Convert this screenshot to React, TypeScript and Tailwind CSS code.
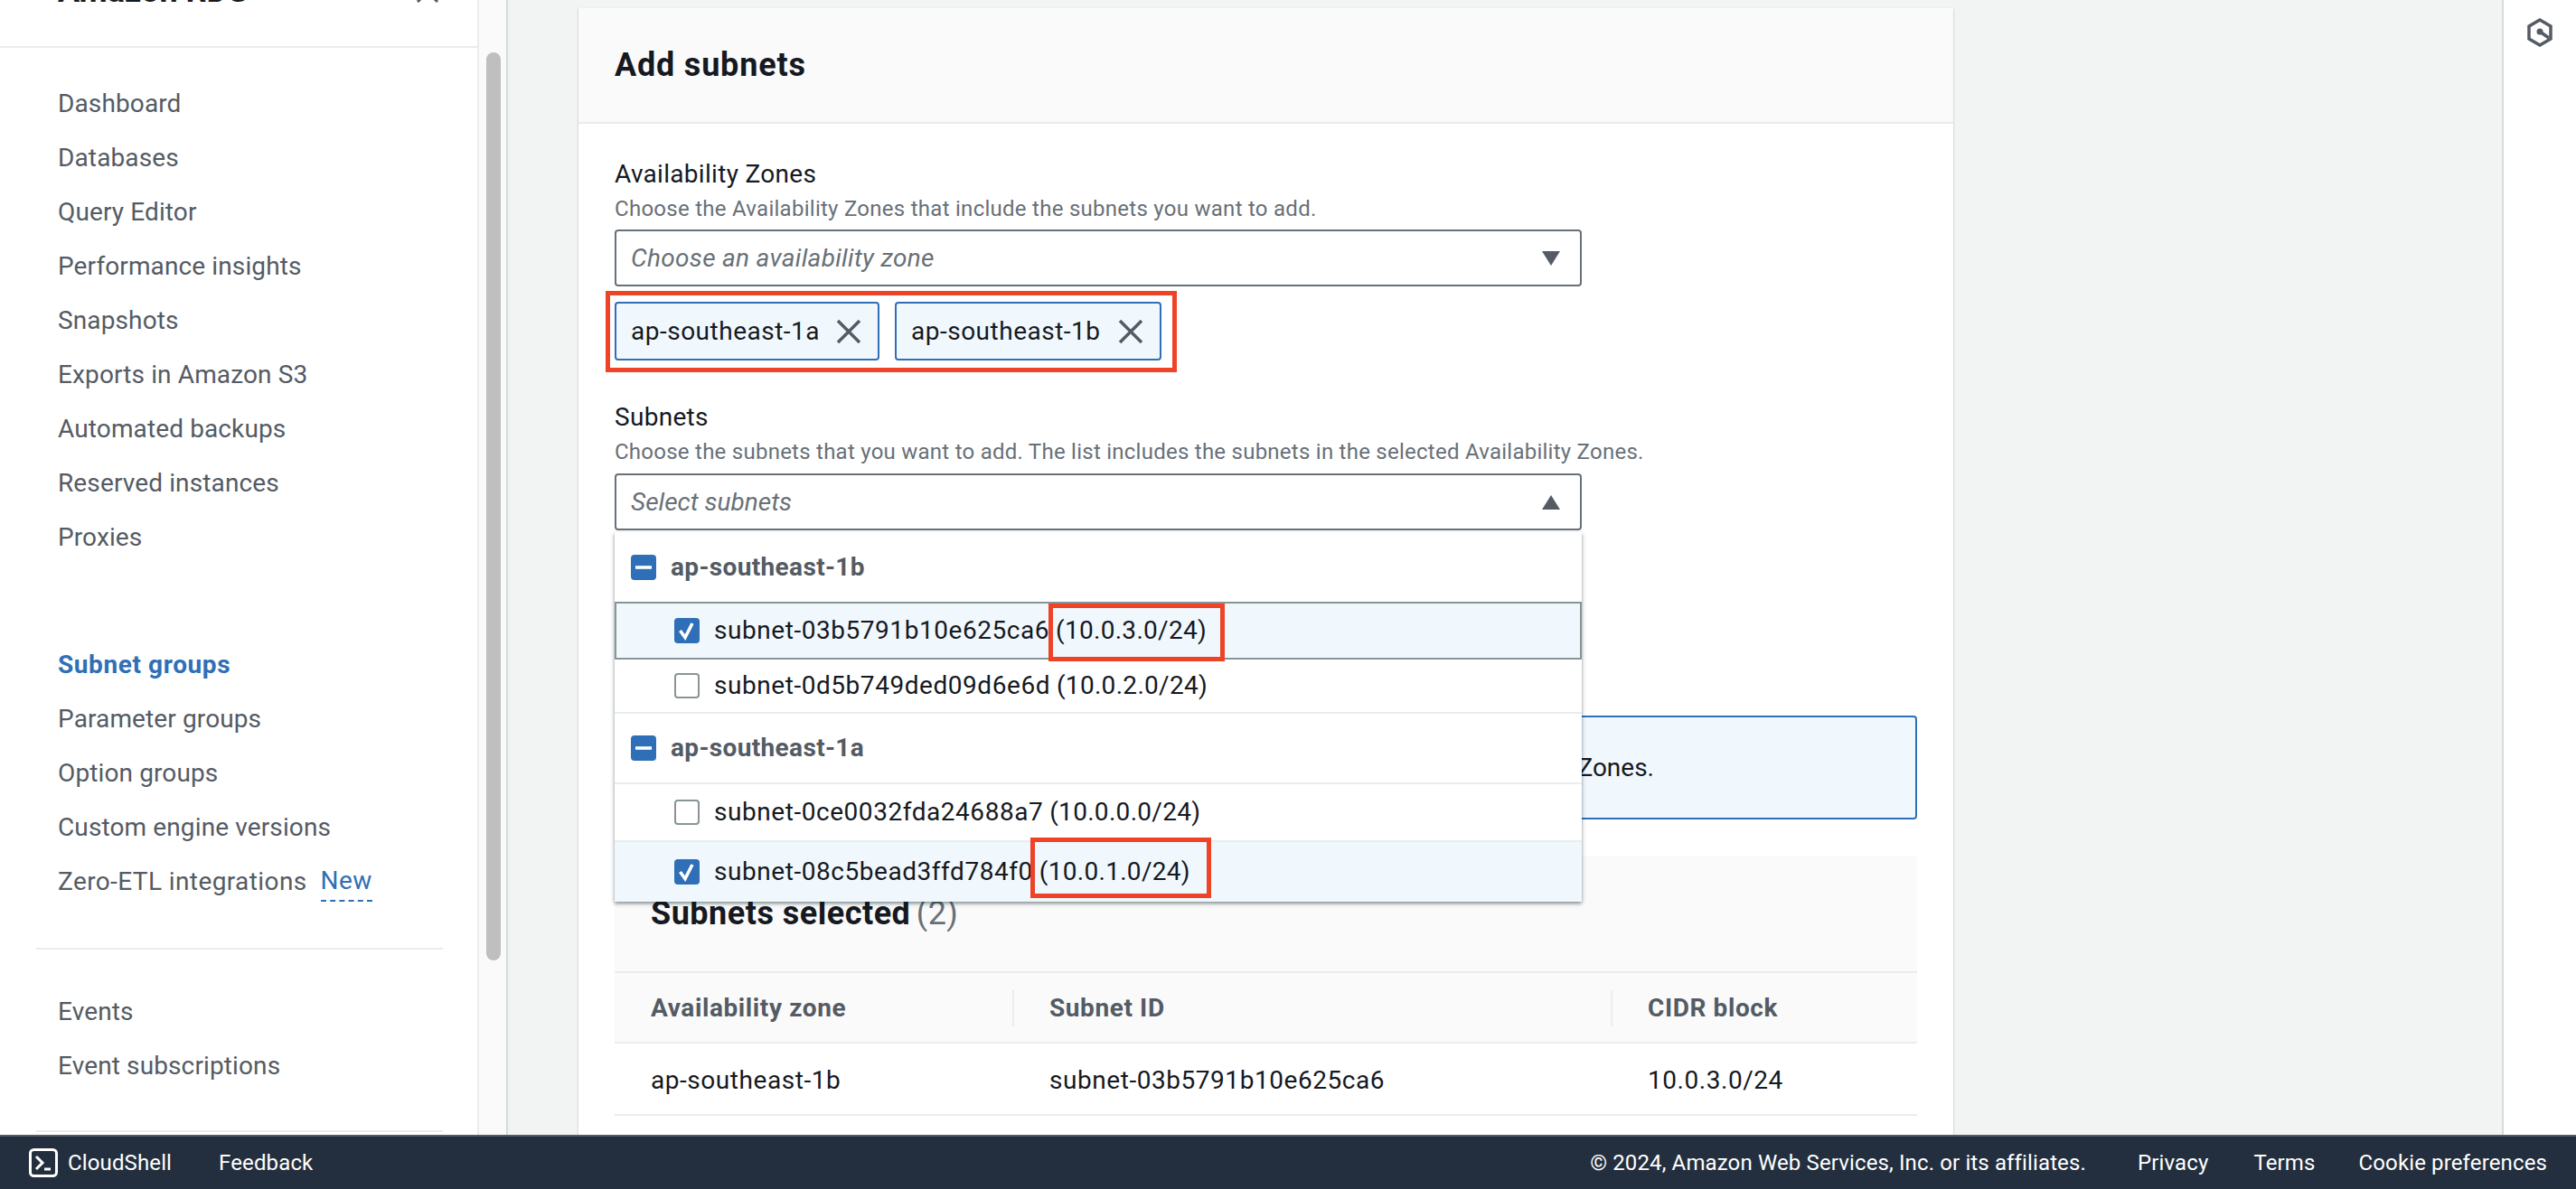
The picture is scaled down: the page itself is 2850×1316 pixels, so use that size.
import React from 'react';

const NAV_TOP = ['Dashboard', 'Databases', 'Query Editor', 'Performance insights', 'Snapshots', 'Exports in Amazon S3', 'Automated backups', 'Reserved instances', 'Proxies'];
const NAV_MID = ['Parameter groups', 'Option groups', 'Custom engine versions'];
const NAV_EVENTS = ['Events', 'Event subscriptions'];

const NavItem: React.FC<{ label: string }> = ({ label }) => (
  <div className="h-[60px] flex items-center text-[28px] tracking-[0.12px] text-[#545b64]">{label}</div>
);

const Checkbox: React.FC<{ state: 'on' | 'off' | 'mixed' }> = ({ state }) => {
  if (state === 'off') {
    return <span className="block w-[28px] h-[28px] shrink-0 rounded-[4px] border-2 border-[#879596] bg-white" />;
  }
  return (
    <span className="flex items-center justify-center w-[28px] h-[28px] shrink-0 rounded-[4px] bg-[#2f6fb7]">
      <svg width="28" height="28" viewBox="0 0 28 28" fill="none" stroke="white" strokeWidth="3.6">
        {state === 'on' ? <path d="M6.500 14l5.500 7.500 8-15.500" /> : <path d="M5 14h18" />}
      </svg>
    </span>
  );
};

const Token: React.FC<{ label: string; width: string }> = ({ label, width }) => (
  <div className={`h-[65px] ${width} flex items-center justify-between pl-[16px] pr-[18px] rounded-[4px] border-2 border-[#2f6fb7] bg-[#f1f8fd] text-[28px] tracking-[0.5px] text-[#16191f]`}>
    <span>{label}</span>
    <svg width="28" height="28" viewBox="0 0 28 28" fill="none" stroke="#545b64" strokeWidth="3.5">
      <path d="M2 2l24 24M26 2 2 26" />
    </svg>
  </div>
);

const SelectBox: React.FC<{ placeholder: string; open?: boolean; className?: string }> = ({ placeholder, open, className }) => (
  <div className="h-[63px] w-[1070px] flex items-center justify-between pl-[16px] pr-[22px] rounded-[4px] border-2 border-[#687078] bg-white">
    <span className={`text-[28px] italic text-[#687078] ${className ?? ''}`}>{placeholder}</span>
    <svg width="20" height="16" viewBox="0 0 20 16" fill="#545b64">
      {open ? <path d="M10 0 20 16H0z" /> : <path d="M0 0h20L10 16z" />}
    </svg>
  </div>
);

const GroupRow: React.FC<{ label: string; heightClass: string; border?: boolean }> = ({ label, heightClass, border }) => (
  <div className={`${heightClass} flex items-center pl-[18px] gap-[16px] ${border ? 'border-b-2 border-[#eaeded]' : ''}`}>
    <Checkbox state="mixed" />
    <span className="text-[28px] font-bold tracking-[0.35px] text-[#545b64]">{label}</span>
  </div>
);

const OptionRow: React.FC<{ id: string; cidr: string; checked?: boolean; className: string; box?: string }> = ({ id, cidr, checked, className, box }) => (
  <div className={`relative flex items-center gap-[16px] text-[28px] text-[#16191f] ${className}`}>
    <Checkbox state={checked ? 'on' : 'off'} />
    <span className="whitespace-pre">
      <span className="tracking-[0.55px]">{id}</span> <span className="tracking-[0.3px]">{cidr}</span>
    </span>
    {box && <div className={`absolute border-[5px] border-[#ee4327] ${box}`} />}
  </div>
);

export default function App() {
  return (
    <div className="w-[2850px] h-[1316px] flex flex-col overflow-hidden bg-[#f2f3f3] font-['Roboto',sans-serif]">
      <div className="flex-1 min-h-0 flex">
        <aside className="w-[562px] shrink-0 flex bg-white border-r-2 border-[#d5dbdb]">
          <div className="w-[530px] shrink-0 border-r-2 border-[#eaeded]">
            <div className="h-[53px] border-b-2 border-[#eaeded] overflow-hidden flex justify-between pl-[64px] pr-[42px]">
              <div className="mt-[-30px] text-[36px] leading-[40px] font-bold text-[#16191f]">Amazon RDS</div>
              <svg className="mt-[-22px]" width="26" height="26" viewBox="0 0 26 26" fill="none" stroke="#545b64" strokeWidth="3">
                <path d="M2 2l22 22M24 2 2 24" />
              </svg>
            </div>
            <nav className="pt-[32px] pl-[64px]">
              {NAV_TOP.map((n) => <NavItem key={n} label={n} />)}
              <div className="mt-[81px] h-[60px] flex items-center text-[28px] font-bold tracking-[0.6px] text-[#2f6fb7]">Subnet groups</div>
              {NAV_MID.map((n) => <NavItem key={n} label={n} />)}
              <div className="h-[60px] flex items-center text-[28px] tracking-[0.4px] text-[#545b64]">
                Zero-ETL integrations
                <span className="ml-[15px] text-[#2f6fb7] border-b-2 border-dashed border-[#2f6fb7]">New</span>
              </div>
            </nav>
            <div className="mt-[43px] ml-[40px] w-[450px] border-t-2 border-[#eaeded]" />
            <div className="mt-[39px] pl-[64px]">
              {NAV_EVENTS.map((n) => <NavItem key={n} label={n} />)}
            </div>
            <div className="mt-[41px] ml-[40px] w-[450px] border-t-2 border-[#eaeded]" />
          </div>
          <div className="flex-1 bg-[#fafafa] pl-[8px] pt-[58px]">
            <div className="w-[16px] h-[1005px] rounded-[8px] bg-[#bfbfbf]" />
          </div>
        </aside>

        <main className="flex-1 min-w-0 pl-[78px] pt-[9px] overflow-hidden">
          <section className="w-[1521px] h-[1300px] bg-white shadow-[0_1px_2px_rgba(0,28,36,0.3)]">
            <header className="h-[128px] flex items-center pl-[40px] bg-[#fafafa] border-b-2 border-[#eaeded]">
              <h2 className="text-[36px] font-bold tracking-[0.8px] text-[#16191f]">Add subnets</h2>
            </header>
            <div className="px-[40px]">
              <div className="mt-[36px] h-[40px] flex items-center text-[28px] tracking-[0.3px] text-[#16191f]">Availability Zones</div>
              <div className="h-[36px] flex items-center text-[24px] tracking-[0.27px] text-[#687078]">Choose the Availability Zones that include the subnets you want to add.</div>
              <div className="mt-[5px]"><SelectBox placeholder="Choose an availability zone" className="tracking-[0.3px]" /></div>

              <div className="relative mt-[17px] flex gap-[17px]">
                <Token label="ap-southeast-1a" width="w-[293px]" />
                <Token label="ap-southeast-1b" width="w-[295px]" />
                <div className="absolute left-[-10px] top-[-12px] w-[632px] h-[90px] border-[5px] border-[#ee4327]" />
              </div>

              <div className="mt-[43px] h-[40px] flex items-center text-[28px] tracking-[0.3px] text-[#16191f]">Subnets</div>
              <div className="h-[36px] flex items-center text-[24px] tracking-[0.25px] text-[#687078]">Choose the subnets that you want to add. The list includes the subnets in the selected Availability Zones.</div>

              <div className="relative mt-[6px]">
                <SelectBox placeholder="Select subnets" open />
                <div className="absolute z-10 left-0 top-[65px] w-[1070px] h-[409px] bg-white shadow-[0_2px_4px_rgba(0,28,36,0.5)]">
                  <GroupRow label="ap-southeast-1b" heightClass="h-[77px]" />
                  <OptionRow id="subnet-03b5791b10e625ca6" cidr="(10.0.3.0/24)" checked className="h-[64px] pl-[64px] bg-[#f1f8fd] border-2 border-[#879596]" box="left-[478px] top-0 w-[195px] h-[64px]" />
                  <OptionRow id="subnet-0d5b749ded09d6e6d" cidr="(10.0.2.0/24)" className="h-[60px] pl-[66px] border-b-2 border-[#eaeded]" />
                  <GroupRow label="ap-southeast-1a" heightClass="h-[78px]" border />
                  <OptionRow id="subnet-0ce0032fda24688a7" cidr="(10.0.0.0/24)" className="h-[62px] pl-[66px]" />
                  <OptionRow id="subnet-08c5bead3ffd784f0" cidr="(10.0.1.0/24)" checked className="h-[68px] pl-[66px] bg-[#f1f8fd] border-t-2 border-[#eaeded]" box="left-[460px] top-[-5px] w-[200px] h-[67px]" />
                </div>
              </div>

              <div className="mt-[205px] h-[115px] flex items-center justify-end pr-[289px] rounded-[4px] border-2 border-[#2f6fb7] bg-[#f1f8fd] text-[28px] text-[#16191f]">
                <span className="whitespace-nowrap">For Multi-AZ DB clusters, you must select 3 subnets in 3 different Availability Zones.</span>
              </div>

              <div className="mt-[40px] bg-[#fafafa]">
                <div className="h-[130px] pt-[42px] pl-[40px] border-b-2 border-[#eaeded] text-[36px] leading-[44px] tracking-[0.5px]">
                  <span className="font-bold text-[#16191f]">Subnets selected</span>{' '}
                  <span className="ml-[-3px] text-[#687078]">(2)</span>
                </div>
                <div className="h-[78px] pt-[2px] grid grid-cols-[440px_662px_1fr] border-b-2 border-[#eaeded] text-[28px] font-bold tracking-[0.6px] text-[#545b64]">
                  <div className="flex items-center pl-[40px]">Availability zone</div>
                  <div className="flex items-center pl-[41px]"><span className="absolute h-[40px] ml-[-41px] border-l-2 border-[#eaeded]" />Subnet ID</div>
                  <div className="flex items-center pl-[41px]"><span className="absolute h-[40px] ml-[-41px] border-l-2 border-[#eaeded]" />CIDR block</div>
                </div>
                <div className="h-[80px] pt-[3px] grid grid-cols-[440px_662px_1fr] border-b-2 border-[#eaeded] bg-white text-[28px] tracking-[0.55px] text-[#16191f]">
                  <div className="flex items-center pl-[40px]">ap-southeast-1b</div>
                  <div className="flex items-center pl-[41px]">subnet-03b5791b10e625ca6</div>
                  <div className="flex items-center pl-[41px]">10.0.3.0/24</div>
                </div>
              </div>
            </div>
          </section>
        </main>

        <aside className="w-[82px] shrink-0 bg-white border-l-2 border-[#d5dbdb] pt-[20px] pl-[26px]">
          <svg width="28" height="32" viewBox="0 0 28 32" fill="none" stroke="#545b64" strokeWidth="3.5">
            <path d="M14 2 26 9v14L14 30 2 23V9z" />
            <circle cx="14" cy="15" r="3.500" fill="#545b64" stroke="none" />
            <path d="M14 15l10 7" />
          </svg>
        </aside>
      </div>

      <footer className="h-[60px] shrink-0 flex items-center justify-between px-[32px] bg-[#232f3e] border-t-2 border-[#545b64] text-[24px] tracking-[0.13px] text-white">
        <div className="flex items-center">
          <svg width="32" height="32" viewBox="0 0 32 32" fill="none" stroke="white" strokeWidth="3">
            <rect x="1.500" y="1.500" width="29" height="29" rx="4" />
            <path d="M8 9l7 7-7 7M17 23h7" />
          </svg>
          <span className="ml-[11px]">CloudShell</span>
          <span className="ml-[52px]">Feedback</span>
        </div>
        <div className="flex items-center">
          <span>© 2024, Amazon Web Services, Inc. or its affiliates.</span>
          <span className="ml-[57px]">Privacy</span>
          <span className="ml-[50px]">Terms</span>
          <span className="ml-[48px]">Cookie preferences</span>
        </div>
      </footer>
    </div>
  );
}
